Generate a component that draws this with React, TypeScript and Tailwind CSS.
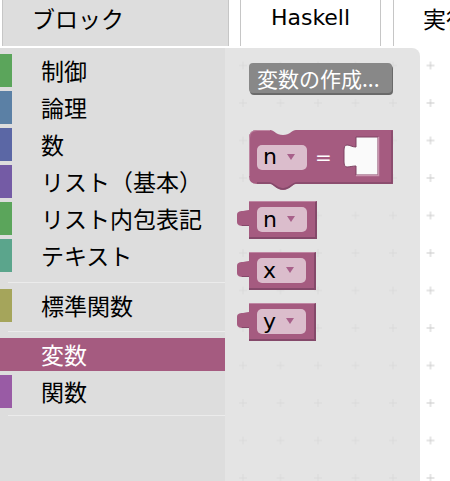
const JP = "font-['Noto_Sans_CJK_JP',sans-serif]"
const LATIN = "font-['DejaVu_Sans','Noto_Sans_CJK_JP',sans-serif]"

type Item =
  | { kind: 'cat'; label: string; color: string; selected?: boolean }
  | { kind: 'sep'; className: string }

const TOOLBOX: Item[] = [
  { kind: 'cat', label: '制御', color: '#5ba55b' },
  { kind: 'cat', label: '論理', color: '#5b80a5' },
  { kind: 'cat', label: '数', color: '#5b67a5' },
  { kind: 'cat', label: 'リスト（基本）', color: '#745ba5' },
  { kind: 'cat', label: 'リスト内包表記', color: '#5ba55b' },
  { kind: 'cat', label: 'テキスト', color: '#5ba58c' },
  { kind: 'sep', className: 'mt-[6px] mb-[6px]' },
  { kind: 'cat', label: '標準関数', color: '#a5a55b' },
  { kind: 'sep', className: 'mt-[5px] mb-[6px]' },
  { kind: 'cat', label: '変数', color: '#a55b80', selected: true },
  { kind: 'cat', label: '関数', color: '#995ba5' },
  { kind: 'sep', className: 'mt-[3px]' },
]

function Toolbox() {
  return (
    <div className={`relative flex w-[225px] shrink-0 flex-col bg-[#dddddd] pt-[6px] ${JP}`}>
      {TOOLBOX.map((item, i) =>
        item.kind === 'sep' ? (
          <div key={i} className={`ml-[8px] h-px shrink-0 bg-[#ebebeb] ${item.className}`} />
        ) : (
          <div
            key={i}
            className="mb-[4px] flex h-[33px] shrink-0 items-center"
            style={item.selected ? { backgroundColor: item.color } : undefined}
          >
            <div className="h-full w-[12px]" style={{ backgroundColor: item.color }} />
            <span
              className={`pl-[29px] text-[23px] leading-none ${item.selected ? 'text-white' : 'text-black'}`}
            >
              {item.label}
            </span>
          </div>
        ),
      )}
    </div>
  )
}

function Dropdown({ name }: { name: string }) {
  return (
    <div className="flex h-[25px] items-center rounded-[5px] bg-[#dbbdcc] pl-[6px] pr-[12px]">
      <span className={`text-[22px] leading-none text-black ${LATIN}`}>{name}</span>
      <svg width="8" height="7" viewBox="0 0 8 7" className="ml-[10px]">
        <path d="M0 0 H8 L4 6 Z" fill="#a8608a" />
      </svg>
    </div>
  )
}

function OutputTab() {
  return (
    <svg width="12" height="16" viewBox="0 0 12 16" className="mt-[9px] shrink-0">
      <path
        d="M12 0 C9 0 8 1 6 1 C2 1 0 2 0 5 V12 C0 15 3 16 6 16 H12 Z"
        fill="#a55b80"
      />
      <path d="M12 15.5 H5" stroke="#84496a" strokeWidth="1" />
    </svg>
  )
}

function Getter({ name }: { name: string }) {
  return (
    <div className="ml-[12px] flex items-start">
      <OutputTab />
      <div className="flex h-[38px] items-center border-b-2 border-r-2 border-t border-[#84496a] border-t-[#bf87a3] bg-[#a55b80] pl-[8px] pr-[8px]">
        <Dropdown name={name} />
      </div>
    </div>
  )
}

function SetBlock() {
  return (
    <div className="ml-[24px] grid w-[144px]">
      <svg width="144" height="60" viewBox="0 0 144 60" className="[grid-area:1/1]">
        <path
          d="M0 8 Q0 0 8 0 H21 C25 0 27 5 34 5 C41 5 43 0 47 0 H144 V54 H47 C43 54 41 60 34 60 C27 60 25 54 21 54 H8 Q0 54 0 46 Z"
          fill="#a55b80"
        />
        <path
          d="M143 0.5 V53 H47 C43 53 41 59 34 59 C27 59 25 53 21 53 H8"
          fill="none"
          stroke="#84496a"
          strokeWidth="1.5"
        />
        <path d="M0.5 46 V8 Q0.5 0.5 8 0.5 H21" fill="none" stroke="#bf87a3" strokeWidth="1" />
        <path
          d="M107 7 H129 V45 H107 V36 C103 36 101 37 98 37 C96 37 95 35 95 32 V20 C95 17 96 15 98 15 C101 15 103 17 107 17 Z"
          fill="#fafafa"
          stroke="#7c4362"
          strokeWidth="1"
        />
        <path d="M129.5 7 V45.5 H107" fill="none" stroke="#c995ae" strokeWidth="1.5" />
      </svg>
      <div className="flex h-[54px] items-center pl-[8px] [grid-area:1/1]">
        <Dropdown name="n" />
        <span className={`ml-[8px] text-[20px] leading-none text-white ${LATIN}`}>=</span>
      </div>
    </div>
  )
}

function Flyout() {
  return (
    <div className="relative w-[195px] shrink-0 rounded-tr-[8px] bg-[#dddddd]/80 pt-[15px]">
      <div className="ml-[24px] flex h-[30px] w-[143px] items-center rounded-[4px] bg-[#888888] pl-[8px] shadow-[1px_2px_0_#6a6a6a]">
        <span className={`text-[21px] leading-none text-white ${JP}`}>変数の作成...</span>
      </div>
      <div className="mt-[37px]">
        <SetBlock />
      </div>
      <div className="mt-[11px]">
        <Getter name="n" />
      </div>
      <div className="mt-[13px]">
        <Getter name="x" />
      </div>
      <div className="mt-[13px]">
        <Getter name="y" />
      </div>
    </div>
  )
}

function Grid() {
  return (
    <svg className="absolute inset-0 h-full w-full" aria-hidden>
      <defs>
        <pattern id="grid" x="-0.75" y="-1.25" width="37.5" height="37.5" patternUnits="userSpaceOnUse">
          <path
            d="M14.75 18.75 H22.75 M18.75 14.75 V22.75"
            stroke="#cccccc"
            strokeWidth="1"
          />
        </pattern>
      </defs>
      <rect width="100%" height="100%" fill="url(#grid)" />
    </svg>
  )
}

export default function App() {
  return (
    <div className="h-[481px] w-[450px] overflow-hidden bg-white">
      <div className="flex h-[46px] pl-[2px]">
        <div className={`w-[227px] shrink-0 border-x border-[#c6c6c6] bg-[#dddddd] pl-[29px] text-[23px] leading-[36px] text-black ${JP}`}>
          ブロック
        </div>
        <div className={`ml-[11px] w-[141px] shrink-0 border-x border-[#c6c6c6] text-center text-[22px] leading-[36px] text-black ${LATIN}`}>
          Haskell
        </div>
        <div className={`ml-[12px] w-[80px] shrink-0 border-l border-[#c6c6c6] pl-[29px] text-[23px] leading-[36px] text-black whitespace-nowrap ${JP}`}>
          実行
        </div>
      </div>
      <div className="relative mt-[2px] flex h-[433px]">
        <Grid />
        <Toolbox />
        <Flyout />
      </div>
    </div>
  )
}
